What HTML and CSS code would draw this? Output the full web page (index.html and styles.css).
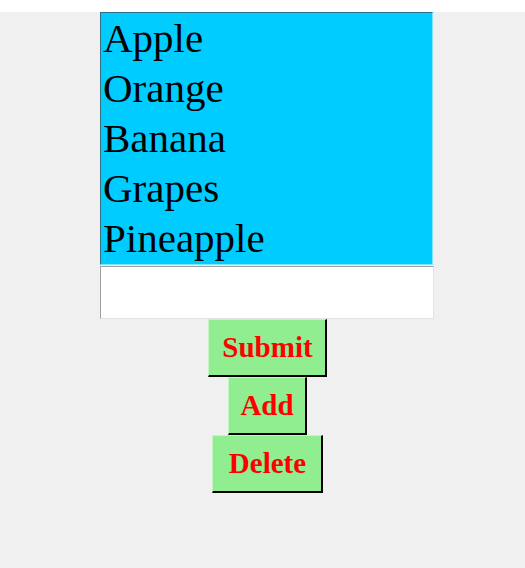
FILE: index.html
```html
<!DOCTYPE html>
<html>
<head>
<meta charset="utf-8">
<link rel="stylesheet" href="styles.css">
</head>
<body>
<div class="topbar"></div>
<div class="main">
  <div class="column">
    <ul class="listbox">
      <li>Apple</li>
      <li>Orange</li>
      <li>Banana</li>
      <li>Grapes</li>
      <li>Pineapple</li>
    </ul>
    <div class="entry"></div>
    <div class="buttons">
      <button class="btn btn-submit">Submit</button>
      <button class="btn btn-add">Add</button>
      <button class="btn btn-delete">Delete</button>
    </div>
  </div>
</div>
</body>
</html>
```
FILE: styles.css
```css
html, body {
  margin: 0;
  padding: 0;
  background: #ffffff;
}
.topbar {
  height: 12px;
  background: #ffffff;
}
.main {
  background: #f0f0f0;
  height: 556px;
  padding-left: 100px;
}
.column {
  width: 334px;
  display: flex;
  flex-direction: column;
}
.listbox {
  list-style: none;
  margin: 0;
  padding: 0 0 1px 2px;
  width: 329px;
  background: #00ccff;
  border-top: 1px solid #2f6f84;
  border-left: 1px solid #2f6f84;
  border-right: 1px solid #7fe5ff;
  border-bottom: 1px solid #7fe5ff;
  font-family: "Liberation Serif", serif;
  font-size: 41px;
  line-height: 50px;
  color: #000;
}
.listbox li {
  height: 50px;
  white-space: nowrap;
}
.entry {
  margin-top: 1px;
  width: 332px;
  height: 51px;
  background: #fff;
  border-top: 1px solid #a0a0a0;
  border-left: 1px solid #a0a0a0;
  border-right: 1px solid #e3e3e3;
  border-bottom: 1px solid #e3e3e3;
}
.buttons {
  display: flex;
  flex-direction: column;
  align-items: center;
  padding-left: 1px;
}
.btn {
  height: 58px;
  margin: 0;
  padding: 0 12px;
  background: #90ee90;
  color: #ff0000;
  font-family: "Liberation Serif", serif;
  font-weight: bold;
  font-size: 29px;
  border-top: 1px solid #c4f6c4;
  border-left: 1px solid #c4f6c4;
  border-right: 2px solid #000;
  border-bottom: 2px solid #000;
  border-radius: 0;
  cursor: pointer;
}
.btn-submit {
  padding: 0 12px 0 13px;
}
.btn-add {
  padding: 0 11px;
}
.btn-delete {
  padding: 0 15px 0 16px;
}
```
